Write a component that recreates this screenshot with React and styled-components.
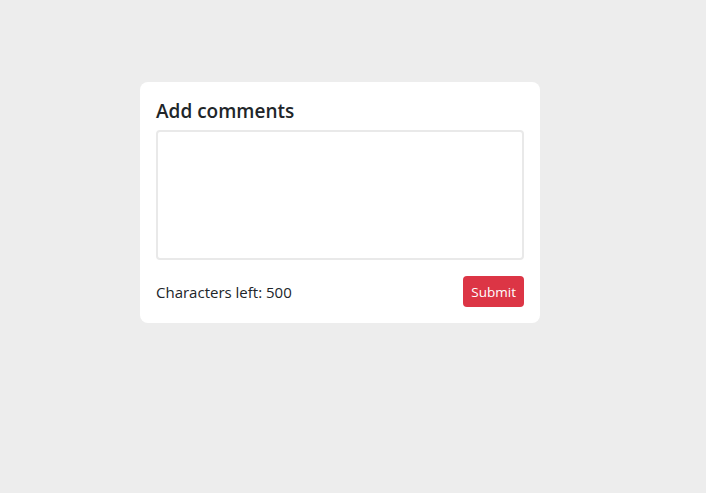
import styled, { createGlobalStyle } from "styled-components";

const GlobalStyle = createGlobalStyle`
  body {
    margin: 0;
    background: #ededed;
    font-family: "Open Sans", "Noto Sans", sans-serif;
    color: #212529;
  }
`;

const Page = styled.div`
  min-height: 493px;
  padding: 82px 0 0 140px;
  box-sizing: border-box;
`;

const Card = styled.div`
  width: 400px;
  box-sizing: border-box;
  background: #fff;
  border-radius: 8px;
  padding: 16px;
  display: flex;
  flex-direction: column;
`;

const Title = styled.h2`
  margin: 0 0 6px;
  font-size: 19px;
  line-height: 26px;
  font-weight: 600;
`;

const TextArea = styled.textarea`
  display: block;
  width: 100%;
  height: 130px;
  box-sizing: border-box;
  border: 2px solid #e9e9e9;
  border-radius: 4px;
  resize: none;
  outline: none;
  padding: 6px 8px;
  font-family: inherit;
  font-size: 15px;
`;

const Footer = styled.div`
  display: flex;
  justify-content: space-between;
  align-items: center;
  margin-top: 16px;
`;

const Counter = styled.span`
  font-size: 15px;
  color: #212529;
`;

const SubmitButton = styled.button`
  height: 31px;
  padding: 0 8px;
  border: none;
  border-radius: 4px;
  background: #dc3545;
  color: #fff;
  font-family: inherit;
  font-size: 13.5px;
  cursor: pointer;
`;

export default function App() {
  return (
    <Page>
      <GlobalStyle />
      <Card>
        <Title>Add comments</Title>
        <TextArea />
        <Footer>
          <Counter>Characters left: 500</Counter>
          <SubmitButton>Submit</SubmitButton>
        </Footer>
      </Card>
    </Page>
  );
}
